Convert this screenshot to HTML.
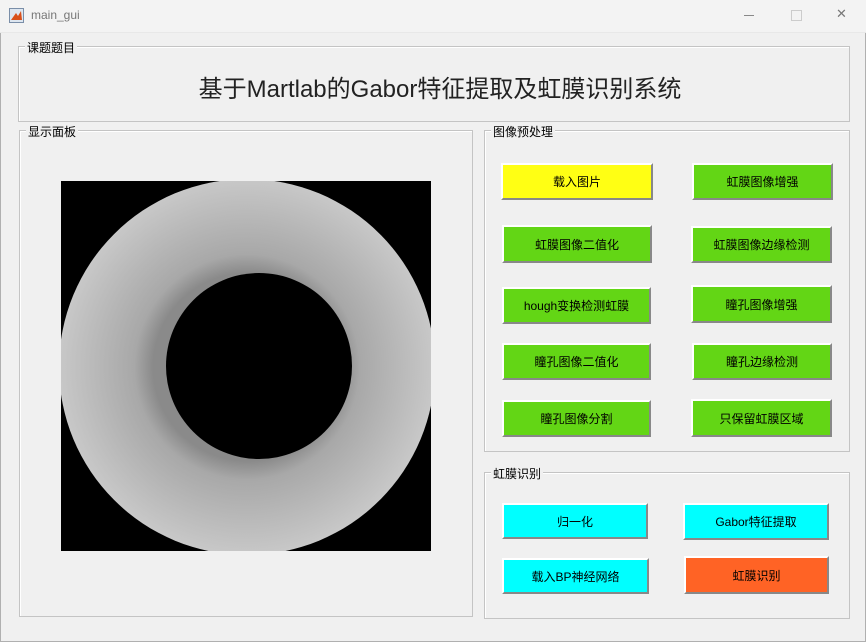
<!DOCTYPE html>
<html><head><meta charset="utf-8"><style>
body{margin:0;width:866px;height:642px;background:#f0f0f0;font-family:"Liberation Sans","Noto Sans CJK SC",sans-serif;position:relative;overflow:hidden}
.tb{position:absolute;left:0;top:0;width:866px;height:32px;background:#f3f3f3;border-bottom:1px solid #e8e8e8}
.tb .t{position:absolute;left:31px;top:8px;font-size:12px;color:#777}
.win{position:absolute;left:0;top:0;width:864px;height:640px;border:1px solid #b0b0b0}
.fs{position:absolute;border:1px solid #c4c4c4;box-shadow:inset 1px 1px 0 #fff}
.lg{position:absolute;top:-8px;left:6px;background:#f0f0f0;font-size:12px;padding:0 2px;color:#000}
.b{position:absolute;box-sizing:border-box;border:2px solid;border-color:#fff #888 #888 #fff;font-size:12px;display:flex;align-items:center;justify-content:center;color:#000}
.g{background:#63d615}.c{background:#00ffff}
</style></head><body>
<div class="win"></div>
<div class="tb"><svg style="position:absolute;left:9px;top:8px" width="15" height="15"><rect x="0.5" y="0.5" width="14" height="14" fill="#dde6f0" stroke="#7a8ea8"/><path d="M2 12 L7 5 L9 8 L12 3 L13 12Z" fill="#d9501a"/></svg><span class="t">main_gui</span>
<span style="position:absolute;left:744px;top:15px;width:10px;height:1px;background:#888"></span>
<span style="position:absolute;left:791px;top:10px;width:9px;height:9px;border:1px solid #ccc"></span>
<span style="position:absolute;left:836px;top:6px;font-size:13px;color:#777">✕</span></div>
<div class="fs" style="left:18px;top:46px;width:830px;height:74px"><span class="lg">课题题目</span>
<div style="position:absolute;left:12px;right:0;top:22px;text-align:center;font-size:24px;color:#222">基于Martlab的Gabor特征提取及虹膜识别系统</div></div>
<div class="fs" style="left:19px;top:130px;width:452px;height:485px"><span class="lg">显示面板</span></div>
<svg style="position:absolute;left:61px;top:181px" width="370" height="370">
<defs><radialGradient id="ir" cx="0.5" cy="0.5" r="0.5"><stop offset="0.5" stop-color="#8a8a8a"/><stop offset="0.6" stop-color="#a8a8a8"/><stop offset="0.8" stop-color="#b8b8b8"/><stop offset="1" stop-color="#c8c8c8"/></radialGradient>
<clipPath id="c"><rect width="370" height="370"/></clipPath></defs>
<rect width="370" height="370" fill="#000"/>
<circle cx="186" cy="186" r="188" fill="url(#ir)" clip-path="url(#c)"/>
<circle cx="198" cy="185" r="93" fill="#000"/>
</svg>
<div class="fs" style="left:484px;top:130px;width:364px;height:320px"><span class="lg">图像预处理</span></div>
<div class="b" style="left:501px;top:163px;width:152px;height:37px;background:#ffff14">载入图片</div>
<div class="b g" style="left:692px;top:163px;width:141px;height:37px">虹膜图像增强</div>
<div class="b g" style="left:502px;top:225px;width:150px;height:38px">虹膜图像二值化</div>
<div class="b g" style="left:691px;top:226px;width:141px;height:37px">虹膜图像边缘检测</div>
<div class="b g" style="left:502px;top:287px;width:149px;height:37px">hough变换检测虹膜</div>
<div class="b g" style="left:691px;top:285px;width:141px;height:38px">瞳孔图像增强</div>
<div class="b g" style="left:502px;top:343px;width:149px;height:37px">瞳孔图像二值化</div>
<div class="b g" style="left:692px;top:343px;width:140px;height:37px">瞳孔边缘检测</div>
<div class="b g" style="left:502px;top:400px;width:149px;height:37px">瞳孔图像分割</div>
<div class="b g" style="left:691px;top:399px;width:141px;height:38px">只保留虹膜区域</div>
<div class="fs" style="left:484px;top:472px;width:364px;height:145px"><span class="lg">虹膜识别</span></div>
<div class="b c" style="left:502px;top:503px;width:146px;height:36px">归一化</div>
<div class="b c" style="left:683px;top:503px;width:146px;height:37px">Gabor特征提取</div>
<div class="b c" style="left:502px;top:558px;width:147px;height:36px">载入BP神经网络</div>
<div class="b" style="left:684px;top:556px;width:145px;height:38px;background:#ff6325">虹膜识别</div>
</body></html>
